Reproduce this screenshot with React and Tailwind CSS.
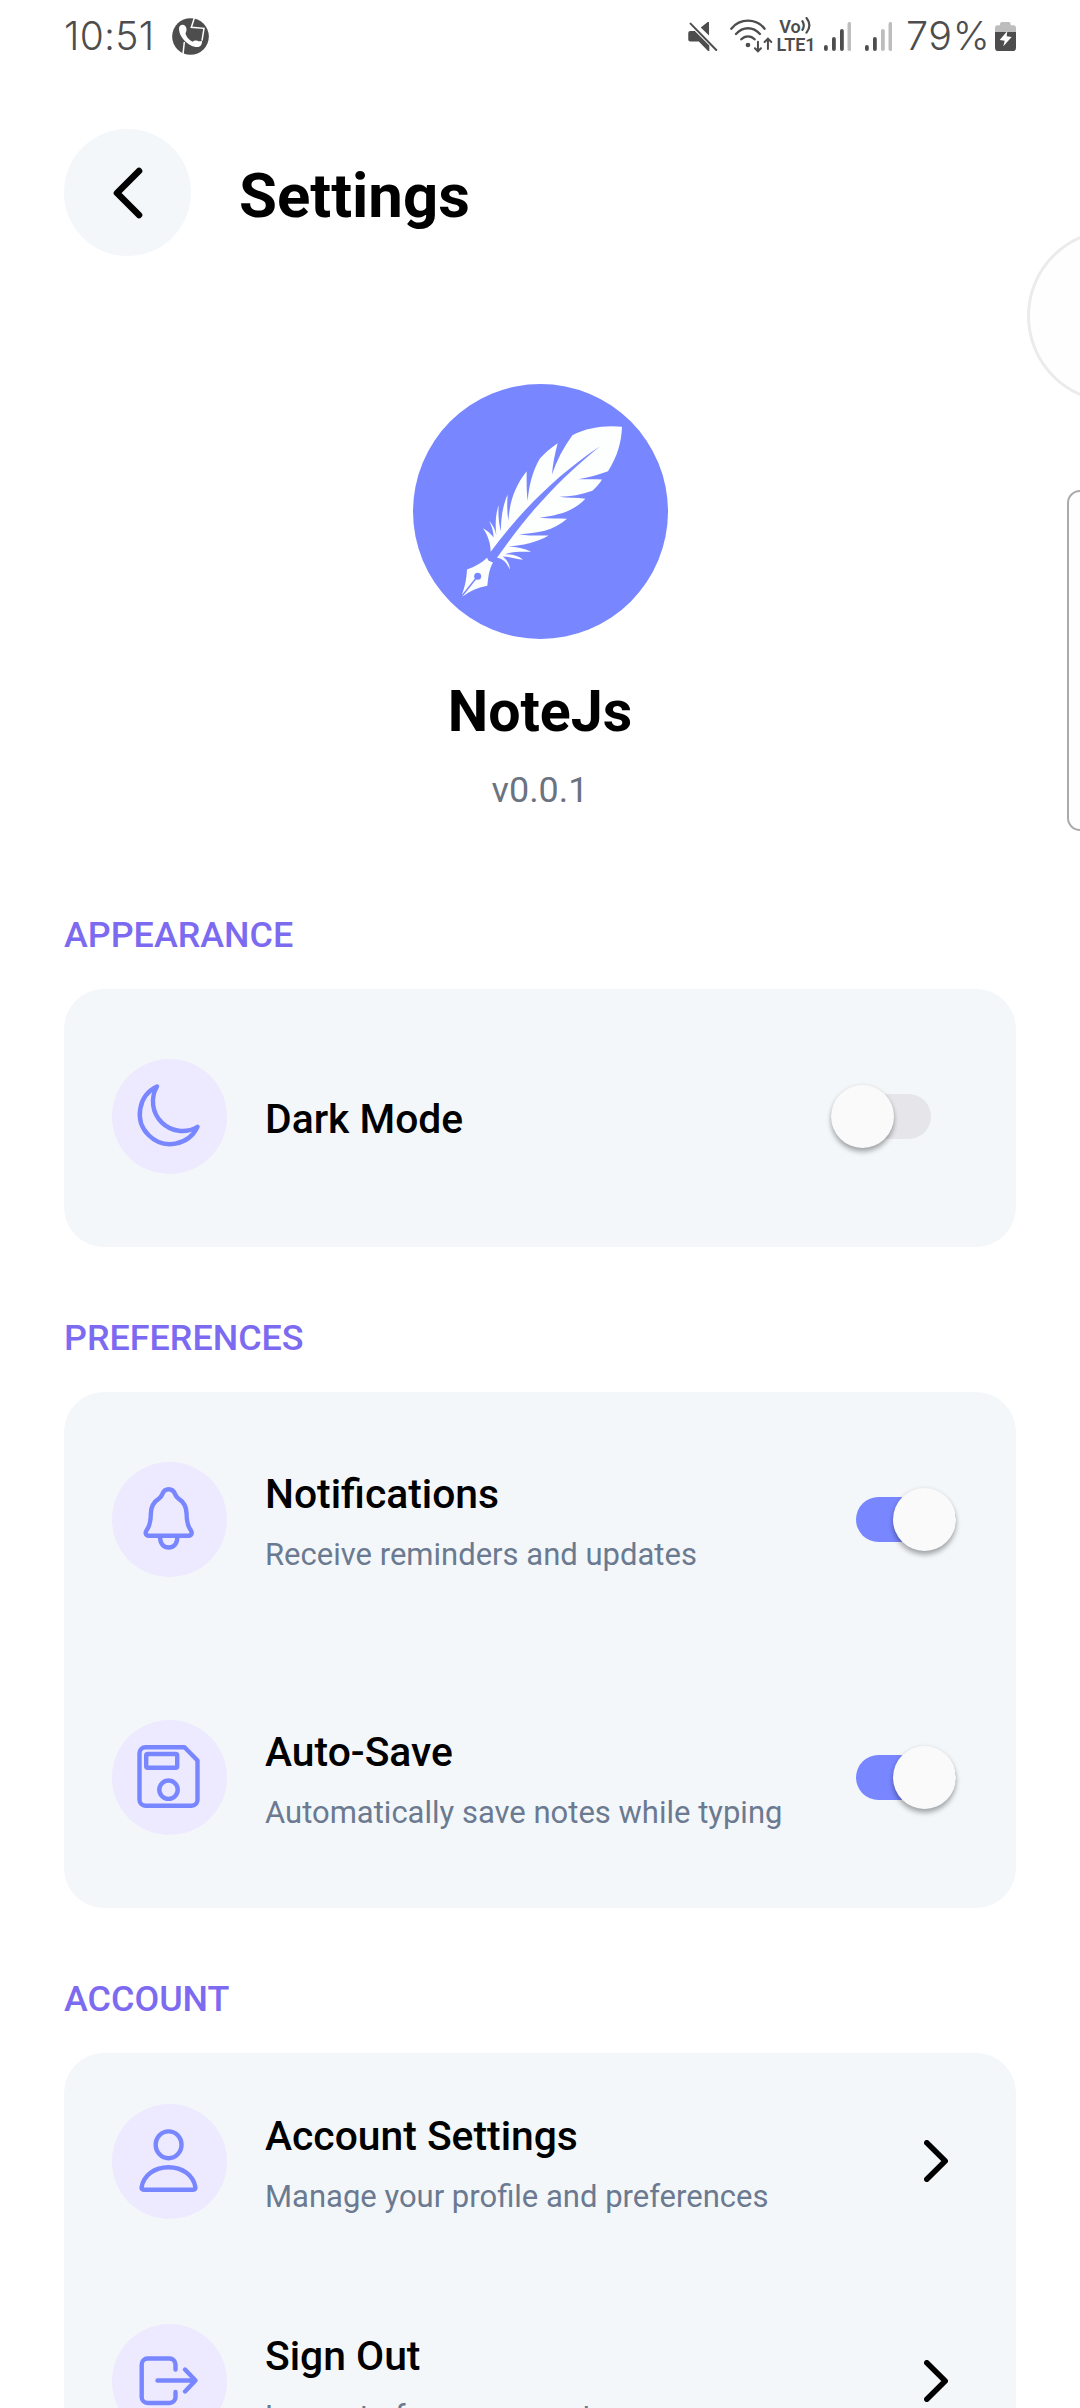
import React from "react";

function Moon() {
  return <path d="M45 27.5A30.3 30.3 0 1 0 85.5 67.8A29.5 29.5 0 0 1 45 27.5Z" />;
}

function Bell() {
  return (
    <>
      <path d="M56.7 27.2c-3.4 0-5.3 2-6.4 4.9c-.8 2-1.2 2.8-2.8 4C42 39.700 39 44 38.900 51c-.1 7-.6 11.500-3.400 15.800c-1.200 1.900-2 3-1.800 4.400c.3 1.900 1.500 2.600 3.300 2.600H76.400c1.800 0 3-.7 3.300-2.600c.2-1.400-.6-2.500-1.800-4.400C75.100 62.500 74.600 58 74.500 51C74.400 44 71.400 39.700 65.900 36.100c-1.600-1.200-2-2-2.800-4c-1.100-2.900-3-4.900-6.400-4.900Z" />
      <path d="M48 74.500c0 6.500 3 11 8.700 11s8.700-4.500 8.700-11" />
    </>
  );
}

function Floppy() {
  return (
    <>
      <path d="M33.500 27.300H72.500L85.500 40.500V79.700a6 6 0 0 1-6 6H33.500a6 6 0 0 1-6-6V33.300a6 6 0 0 1 6-6Z" />
      <rect x="34.200" y="34" width="31" height="13.800" rx="1.500" />
      <circle cx="56.500" cy="69.700" r="9.200" />
    </>
  );
}

function Person() {
  return (
    <>
      <ellipse cx="56.600" cy="40.800" rx="12.900" ry="13.400" />
      <path d="M31.700 85.800H81.300c1.500 0 2.300-1 2.100-2.500C81.500 71.300 70.500 63.200 56.500 63.200S31.500 71.300 29.600 83.300c-.2 1.500.6 2.500 2.100 2.500Z" />
    </>
  );
}

function Exit() {
  return (
    <>
      <path d="M63.500 45.500V40.500a6 6 0 0 0-6-6H35.700a6 6 0 0 0-6 6V73a6 6 0 0 0 6 6H57.500a6 6 0 0 0 6-6V68" />
      <path d="M45.500 56.500H83M73 45.500L83.500 56.500L73 67.500" />
    </>
  );
}

function IconDisc({ children }) {
  return (
    <div className="h-[115px] w-[115px] shrink-0 rounded-full bg-[#ede9fe]">
      <svg viewBox="0 0 115 115" className="h-full w-full" fill="none" stroke="#7886ff" strokeWidth="4.4" strokeLinecap="round" strokeLinejoin="round">
        {children}
      </svg>
    </div>
  );
}

function Toggle({ on }) {
  return (
    <div className={on ? "mr-[12px] mb-px flex h-[45px] w-[100px] items-center justify-end rounded-full bg-[#7886ff]" : "mr-[37px] mb-px flex h-[45px] w-[100px] items-center justify-start rounded-full bg-[#e5e5ea]"}>
      <div className="h-[63px] w-[63px] shrink-0 rounded-full bg-[#fafafa] shadow-[0_4px_5px_rgba(0,0,0,0.3),0_0_4px_rgba(0,0,0,0.08)]" />
    </div>
  );
}

function ChevronRight() {
  return (
    <svg viewBox="0 0 24 42" className="mr-[20px] mb-px h-[42px] w-[24px]" fill="none" stroke="#000" strokeWidth="5.5" strokeLinecap="round" strokeLinejoin="round">
      <path d="M2.800 2.800L21.200 21L2.800 39.200" />
    </svg>
  );
}

function Row({ icon, title, sub, tall, children }) {
  return (
    <div className={tall ? "h-[258px] pt-[70px] pr-12 pl-12" : "h-[220px] pt-[51px] pr-12 pl-12"}>
      <div className="flex h-[115px] items-center">
        <IconDisc>{icon}</IconDisc>
        <div className={sub ? "ml-[38px] flex-1 pt-[3px]" : "ml-[38px] flex-1 pt-[5px]"}>
          <div className="text-[40.8px] leading-[48px] font-medium text-black">{title}</div>
          {sub && <div className="mt-[18px] text-[31px] leading-[37px] whitespace-nowrap text-[#6b7a90]">{sub}</div>}
        </div>
        {children}
      </div>
    </div>
  );
}

function Section({ title, children }) {
  return (
    <section>
      <h2 className="mb-[33px] text-[35.9px] leading-[42px] font-medium text-[#7c6bf0]">{title}</h2>
      <div className="rounded-[40px] bg-[#f3f7fa]">{children}</div>
    </section>
  );
}

function Bars({ lit }) {
  const bars = [
    [823, 45, 6],
    [831, 37, 14],
    [839, 29, 22],
    [846.500, 22, 29],
  ];
  return (
    <svg viewBox="823 22 27.500 29" className="h-[29px] w-[27.500px]">
      {bars.map(([x, y, h], i) => (
        <rect key={x} x={x} y={y} width="3.800" height={h} rx="1.900" fill={i < lit ? "#4d4d4d" : "#bdbdbd"} />
      ))}
    </svg>
  );
}

function StatusBar() {
  return (
    <div className="flex h-[72px] items-center pr-[64px] pl-[64px] font-['Inter'] text-[#4d4d4d]">
      <span className="w-[92px] text-[39px] leading-[72px] font-light tracking-[0.300px]">10:51</span>
      <svg viewBox="396 54 111 111" className="ml-[16px] h-[37px] w-[37px]">
        <circle cx="451.500" cy="109.500" r="55" fill="#4d4d4d" />
        <path d="M463 54L454 82L492 85L486 122M433 126L429 163" fill="none" stroke="#fff" strokeWidth="4.500" />
        <path d="M417 86C417 78 424 73 431 75C438 77 441 86 439 94C437 98 436 101 438 105C442 115 449 121 458 125C461 122 467 120 472 122C477 124 481 124 486 122C487 132 482 142 470 141C450 140 418 116 417 86Z" fill="#fff" />
      </svg>
      <div className="ml-auto flex items-center">
        <svg viewBox="78 65 88 88" className="h-[29px] w-[29.500px]">
          <path d="M84 92H98L142 136V153H138L110 124H84Q78 124 78 118V98Q78 92 84 92ZM141 65V106L116 82L137 65Z" fill="#4d4d4d" />
          <path d="M85 70L163 150" stroke="#4d4d4d" strokeWidth="6" strokeLinecap="round" />
        </svg>
        <svg viewBox="203 58 128 102" className="ml-[12px] h-[34px] w-[42.600px]" fill="none" stroke="#4d4d4d" strokeWidth="7" strokeLinecap="round">
          <path d="M207 87C233 55 282 55 307 87M221 103C242 80 272 80 293 103M237 119C248 107 266 107 277 119" />
          <circle cx="257" cy="136" r="7" fill="#4d4d4d" stroke="none" />
          <path d="M287 126V154M278 146L287 155L296 146M317 148V119M307 127L317 117L327 127" strokeWidth="6" />
        </svg>
        <div className="ml-[4px] w-[38px] text-center font-['Roboto'] text-[18px] leading-[18px] font-semibold">
          <div className="flex justify-center">
            <span>Vo</span>
            <svg viewBox="420 62 32 50" className="mt-[-1px] h-[17px] w-[11px]" fill="none" stroke="#4d4d4d" strokeWidth="6.500" strokeLinecap="round">
              <path d="M424 74Q432 87 424 100M436 65Q453 86 436 108" />
            </svg>
          </div>
          <div>LTE1</div>
        </div>
        <div className="ml-[9px] flex gap-[13.500px]">
          <Bars lit={3} />
          <Bars lit={2} />
        </div>
        <span className="ml-[14px] w-[83px] text-[39.500px] leading-[72px] font-light tracking-[0.600px]">79%</span>
        <svg viewBox="1005 66 63 87" className="ml-[6px] h-[29px] w-[21px]">
          <path d="M1005 96V84Q1005 76 1013 76H1020V72Q1020 66 1026 66H1046Q1052 66 1052 72V76H1060Q1068 76 1068 84V96Z" fill="#bdbdbd" />
          <path d="M1005 96H1068V143Q1068 153 1058 153H1015Q1005 153 1005 143Z" fill="#4d4d4d" />
          <path d="M1042 93L1019 120L1034 122L1030 139L1055 111L1040 109Z" fill="#fff" />
        </svg>
      </div>
    </div>
  );
}

function Logo() {
  return (
    <svg viewBox="39 41.500 765 765" className="h-[255px] w-[255px]">
      <circle cx="421.500" cy="424" r="382.500" fill="#7886ff" />
      <g fill="#fcfffe">
        <path d="M272 545C272 520 264 496 249 474C262 481 272 490 281 502C280 484 275 466 267 452C279 464 286 479 289 496C285 462 287 430 296 405C294 432 296 460 303 483C302 444 309 404 323 373C321 399 321 425 325 451C329 394 345 347 380 303C380 330 379 360 383 392C387 345 398 303 419 266C433 249 454 232 473 219C465 250 458 281 456 313C470 271 490 232 517 195C563 172 615 165 666 170C664 218 652 260 624 303C595 314 565 322 535 327C559 328 582 327 606 328C598 341 588 352 577 362C545 374 512 379 478 380C504 384 530 382 556 386C520 424 474 436 418 442C446 447 474 444 501 446C462 482 410 490 357 492C386 497 416 496 446 496C410 517 367 526 325 529C349 531 373 534 393 545C364 544 336 544 314 552C337 552 357 557 369 569C348 566 328 559 308 559C321 569 330 582 329 598C320 576 309 566 291 563C383 430 475 330 600 228C462 320 358 429 272 545Z" />
        <path d="M261 563L266 572L279 577C266 600 265 623 262 647C235 652 211 662 189 678L186 673C196 647 200 622 201 598C225 590 245 579 261 563Z" />
      </g>
      <circle cx="233" cy="618" r="10.500" fill="#7886ff" />
      <path d="M233 618L187 676" stroke="#7886ff" strokeWidth="4.500" />
    </svg>
  );
}

export default function App() {
  return (
    <div className="relative h-[2408px] w-[1080px] overflow-hidden bg-white font-['Roboto',sans-serif]">
      <StatusBar />
      <header className="mt-[57px] flex h-[127px] items-center px-16">
        <button className="flex h-[127px] w-[127px] items-center justify-center rounded-full bg-[#f3f7fa]">
          <svg viewBox="0 0 30 52" className="h-[52px] w-[30px]" fill="none" stroke="#000" strokeWidth="6.600" strokeLinecap="round" strokeLinejoin="round">
            <path d="M26 4L4 26L26 48" />
          </svg>
        </button>
        <h1 className="ml-12 pt-[7px] text-[61.700px] leading-[72px] font-bold text-black">Settings</h1>
      </header>

      <div className="mt-32 flex flex-col items-center">
        <Logo />
        <div className="mt-[39px] text-[57.300px] leading-[68px] font-bold text-black">NoteJs</div>
        <div className="mt-[23px] text-[35.900px] leading-[42px] text-[#6b7280]">v0.0.1</div>
      </div>

      <main className="mt-[103px] flex flex-col gap-[70px] px-16">
        <Section title="APPEARANCE">
          <Row tall icon={<Moon />} title="Dark Mode">
            <Toggle />
          </Row>
        </Section>
        <Section title="PREFERENCES">
          <Row tall icon={<Bell />} title="Notifications" sub="Receive reminders and updates">
            <Toggle on />
          </Row>
          <Row tall icon={<Floppy />} title="Auto-Save" sub="Automatically save notes while typing">
            <Toggle on />
          </Row>
        </Section>
        <Section title="ACCOUNT">
          <Row icon={<Person />} title="Account Settings" sub="Manage your profile and preferences">
            <ChevronRight />
          </Row>
          <Row icon={<Exit />} title="Sign Out" sub="Log out of your account">
            <ChevronRight />
          </Row>
        </Section>
      </main>

      {/* Floating edge handles that extend past the right side of the screen */}
      <div className="absolute top-[229px] left-[1027px] h-[174px] w-[174px] rounded-full border-[3px] border-[#ebebeb] bg-[#fefefe]" />
      <div className="absolute top-[490px] left-[1067px] h-[341px] w-[40px] rounded-[13px] border-[2.500px] border-[#ababab] bg-[#fefefe]" />
    </div>
  );
}
